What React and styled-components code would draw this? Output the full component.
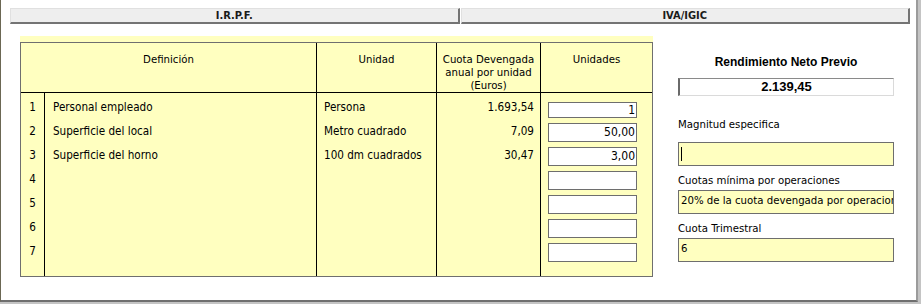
import React from 'react';
import styled, { createGlobalStyle } from 'styled-components';

const uiFont = `"DejaVu Sans Condensed", "Liberation Sans", sans-serif`;

const GlobalStyle = createGlobalStyle`
  html, body {
    margin: 0;
    padding: 0;
  }
  body {
    width: 921px;
    height: 304px;
    overflow: hidden;
    background: #c4c4c4;
  }
`;

const Window = styled.div`
  box-sizing: border-box;
  width: 918px;
  height: 302px;
  background: #fff;
  border-left: 1px solid #6b6753;
  border-right: 2px solid #9b9b9b;
  border-bottom: 2px solid #6f6f6f;
  padding: 8px 6px 0 9px;
  font-family: ${uiFont};
  font-stretch: condensed;
  color: #000;
`;

const Tabs = styled.div`
  display: flex;
  gap: 1px;
  height: 16px;
`;

const Tab = styled.div`
  flex: 1;
  box-sizing: border-box;
  background: #eeeeee;
  border-top: 1px solid #e0e0e0;
  border-left: 1px solid #e0e0e0;
  border-right: 2px solid #747474;
  border-bottom: 2px solid #747474;
  font-size: 11px;
  font-weight: bold;
  line-height: 13px;
  text-align: center;
  color: #1a1a1a;
`;

const Content = styled.div`
  display: flex;
  gap: 25px;
  margin-top: 12px;
  padding-left: 10px;
`;

/* yellow block with the table */
const TableBlock = styled.div`
  width: 633px;
  padding-top: 6px;
  background: #ffffc0;
`;

const Table = styled.div`
  border: 1px solid #6f6f6f;
`;

const cols = `23px 272px 120px 104px 112px`;

const HeaderRow = styled.div`
  display: grid;
  grid-template-columns: ${cols};
  height: 49px;
  border-bottom: 1px solid #000;
`;

const HeadCell = styled.div`
  grid-column: span ${p => p.$span || 1};
  border-left: ${p => (p.$first ? 'none' : '1px solid #000')};
  padding-top: 10px;
  font-size: 11.3px;
  line-height: 13px;
  text-align: center;
`;

const Body = styled.div`
  display: grid;
  grid-template-columns: ${cols};
  height: 183px;
`;

const Column = styled.div`
  display: flex;
  flex-direction: column;
  border-left: ${p => (p.$first ? 'none' : '1px solid #000')};
  padding-top: 5px;
`;

const Cell = styled.div`
  box-sizing: border-box;
  height: 24px;
  padding: 2px ${p => p.$padRight || 0}px 0 ${p => p.$padLeft || 0}px;
  font-size: 11.6px;
  line-height: 14px;
  text-align: ${p => p.$align || 'left'};
  white-space: nowrap;
`;

const UnitInput = styled.div`
  box-sizing: border-box;
  flex: none;
  width: 89px;
  height: ${p => (p.$compact ? 16 : 19)}px;
  margin: ${p => (p.$compact ? 4 : 1)}px 0 4px 7px;
  background: #fff;
  border: 1px solid #6e6e6e;
  padding-right: 1px;
  font-size: 12px;
  line-height: ${p => (p.$compact ? 14 : 17)}px;
  text-align: right;
`;

/* right side */
const SidePanel = styled.div`
  display: flex;
  flex-direction: column;
  width: 216px;
`;

const SideTitle = styled.div`
  margin-top: 19px;
  font-family: "Liberation Sans", Arial, sans-serif;
  font-stretch: normal;
  font-size: 12px;
  font-weight: bold;
  line-height: 14px;
  text-align: center;
`;

const ResultBox = styled.div`
  box-sizing: border-box;
  height: 18px;
  margin-top: 9px;
  background: #fff;
  border-style: solid;
  border-width: 1px 1px 1px 2px;
  border-color: #8a8a8a #dadada #dadada #6a6a6a;
  font-family: "Liberation Sans", Arial, sans-serif;
  font-stretch: normal;
  font-size: 13px;
  font-weight: bold;
  line-height: 15px;
  text-align: center;
`;

const FieldLabel = styled.div`
  margin-top: ${p => p.$top}px;
  font-size: 11.3px;
  line-height: 14px;
  white-space: nowrap;
`;

const FieldBox = styled.div`
  box-sizing: border-box;
  height: 24px;
  margin-top: ${p => p.$top}px;
  background: #ffffc0;
  border: 1px solid #6e6e6e;
  padding: 2px 0 0 2px;
  font-size: 11.3px;
  line-height: 16px;
  white-space: nowrap;
  overflow: hidden;
`;

const Caret = styled.span`
  display: inline-block;
  width: 1px;
  height: 14px;
  margin-top: 2px;
  background: #000;
  vertical-align: top;
`;

const rows = [
  { def: 'Personal empleado', unit: 'Persona', cuota: '1.693,54', units: '1' },
  { def: 'Superficie del local', unit: 'Metro cuadrado', cuota: '7,09', units: '50,00' },
  { def: 'Superficie del horno', unit: '100 dm cuadrados', cuota: '30,47', units: '3,00' },
  { def: '', unit: '', cuota: '', units: '' },
  { def: '', unit: '', cuota: '', units: '' },
  { def: '', unit: '', cuota: '', units: '' },
  { def: '', unit: '', cuota: '', units: '' },
];

export default function App() {
  return (
    <>
      <GlobalStyle />
      <Window>
        <Tabs>
          <Tab>I.R.P.F.</Tab>
          <Tab>IVA/IGIC</Tab>
        </Tabs>

        <Content>
          <TableBlock>
            <Table>
              <HeaderRow>
                <HeadCell $first $span={2}>Definición</HeadCell>
                <HeadCell>Unidad</HeadCell>
                <HeadCell>
                  Cuota Devengada
                  <br />
                  anual por unidad
                  <br />
                  (Euros)
                </HeadCell>
                <HeadCell>Unidades</HeadCell>
              </HeaderRow>

              <Body>
                <Column $first>
                  {rows.map((r, i) => (
                    <Cell key={i} $align="center">{i + 1}</Cell>
                  ))}
                </Column>
                <Column>
                  {rows.map((r, i) => (
                    <Cell key={i} $padLeft={8}>{r.def}</Cell>
                  ))}
                </Column>
                <Column>
                  {rows.map((r, i) => (
                    <Cell key={i} $padLeft={7}>{r.unit}</Cell>
                  ))}
                </Column>
                <Column>
                  {rows.map((r, i) => (
                    <Cell key={i} $align="right" $padRight={6}>{r.cuota}</Cell>
                  ))}
                </Column>
                <Column>
                  {rows.map((r, i) => (
                    <UnitInput key={i} $compact={i === 0}>{r.units}</UnitInput>
                  ))}
                </Column>
              </Body>
            </Table>
          </TableBlock>

          <SidePanel>
            <SideTitle>Rendimiento Neto Previo</SideTitle>
            <ResultBox>2.139,45</ResultBox>

            <FieldLabel $top={22}>Magnitud especifica</FieldLabel>
            <FieldBox $top={10}>
              <Caret />
            </FieldBox>

            <FieldLabel $top={8}>Cuotas mínima por operaciones</FieldLabel>
            <FieldBox $top={2}>20% de la cuota devengada por operaciones</FieldBox>

            <FieldLabel $top={8}>Cuota Trimestral</FieldLabel>
            <FieldBox $top={2}>6</FieldBox>
          </SidePanel>
        </Content>
      </Window>
    </>
  );
}
